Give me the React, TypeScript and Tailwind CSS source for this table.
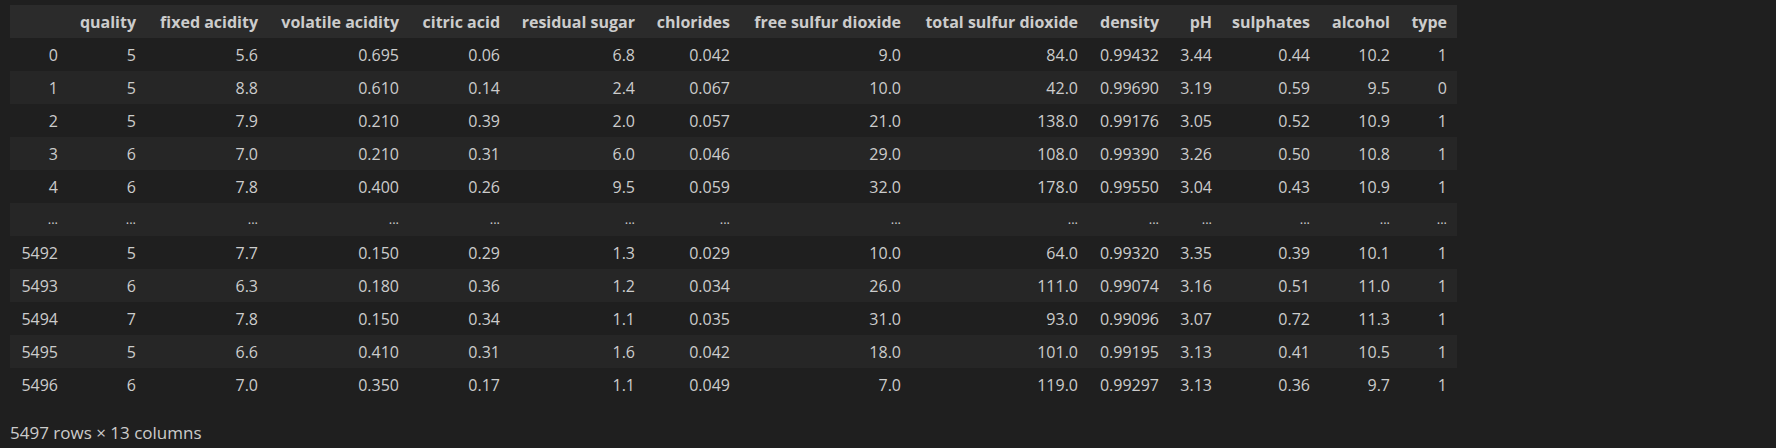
const columns = [
  { label: '', width: 58 },
  { label: 'quality', width: 78 },
  { label: 'fixed acidity', width: 122 },
  { label: 'volatile acidity', width: 141 },
  { label: 'citric acid', width: 101 },
  { label: 'residual sugar', width: 135 },
  { label: 'chlorides', width: 95 },
  { label: 'free sulfur dioxide', width: 171 },
  { label: 'total sulfur dioxide', width: 177 },
  { label: 'density', width: 81 },
  { label: 'pH', width: 53 },
  { label: 'sulphates', width: 98 },
  { label: 'alcohol', width: 80 },
  { label: 'type', width: 57 },
];

const rows: string[][] = [
  ['0', '5', '5.6', '0.695', '0.06', '6.8', '0.042', '9.0', '84.0', '0.99432', '3.44', '0.44', '10.2', '1'],
  ['1', '5', '8.8', '0.610', '0.14', '2.4', '0.067', '10.0', '42.0', '0.99690', '3.19', '0.59', '9.5', '0'],
  ['2', '5', '7.9', '0.210', '0.39', '2.0', '0.057', '21.0', '138.0', '0.99176', '3.05', '0.52', '10.9', '1'],
  ['3', '6', '7.0', '0.210', '0.31', '6.0', '0.046', '29.0', '108.0', '0.99390', '3.26', '0.50', '10.8', '1'],
  ['4', '6', '7.8', '0.400', '0.26', '9.5', '0.059', '32.0', '178.0', '0.99550', '3.04', '0.43', '10.9', '1'],
  Array(14).fill('...'),
  ['5492', '5', '7.7', '0.150', '0.29', '1.3', '0.029', '10.0', '64.0', '0.99320', '3.35', '0.39', '10.1', '1'],
  ['5493', '6', '6.3', '0.180', '0.36', '1.2', '0.034', '26.0', '111.0', '0.99074', '3.16', '0.51', '11.0', '1'],
  ['5494', '7', '7.8', '0.150', '0.34', '1.1', '0.035', '31.0', '93.0', '0.99096', '3.07', '0.72', '11.3', '1'],
  ['5495', '5', '6.6', '0.410', '0.31', '1.6', '0.042', '18.0', '101.0', '0.99195', '3.13', '0.41', '10.5', '1'],
  ['5496', '6', '7.0', '0.350', '0.17', '1.1', '0.049', '7.0', '119.0', '0.99297', '3.13', '0.36', '9.7', '1'],
];

export default function App() {
  return (
    <div
      className="w-[1776px] h-[448px] bg-[#1f1f1f] text-[#cccccc] pt-[5px] pl-[10px]"
      style={{ fontFamily: '"Open Sans", "Noto Sans", sans-serif' }}
    >
      <table className="table-fixed border-collapse text-[16px] w-[1447px]">
        <colgroup>
          {columns.map((c, i) => (
            <col key={i} style={{ width: c.width }} />
          ))}
        </colgroup>
        <thead>
          <tr className="bg-[#2b2b2b] h-[33px]">
            {columns.map((c, i) => (
              <th key={i} className="text-right font-bold pr-[10px] pl-0 whitespace-nowrap">
                {c.label}
              </th>
            ))}
          </tr>
        </thead>
        <tbody>
          {rows.map((r, ri) => (
            <tr key={ri} className={ri % 2 === 1 ? 'h-[33px] bg-[#262626]' : 'h-[33px]'}>
              {r.map((v, ci) => (
                <td
                  key={ci}
                  className={
                    v === '...'
                      ? 'text-right pr-[10px] whitespace-nowrap text-[13px]'
                      : 'text-right pr-[10px] whitespace-nowrap'
                  }
                >
                  {v}
                </td>
              ))}
            </tr>
          ))}
        </tbody>
      </table>
      <p className="mt-[19px] text-[17px]">5497 rows × 13 columns</p>
    </div>
  );
}
